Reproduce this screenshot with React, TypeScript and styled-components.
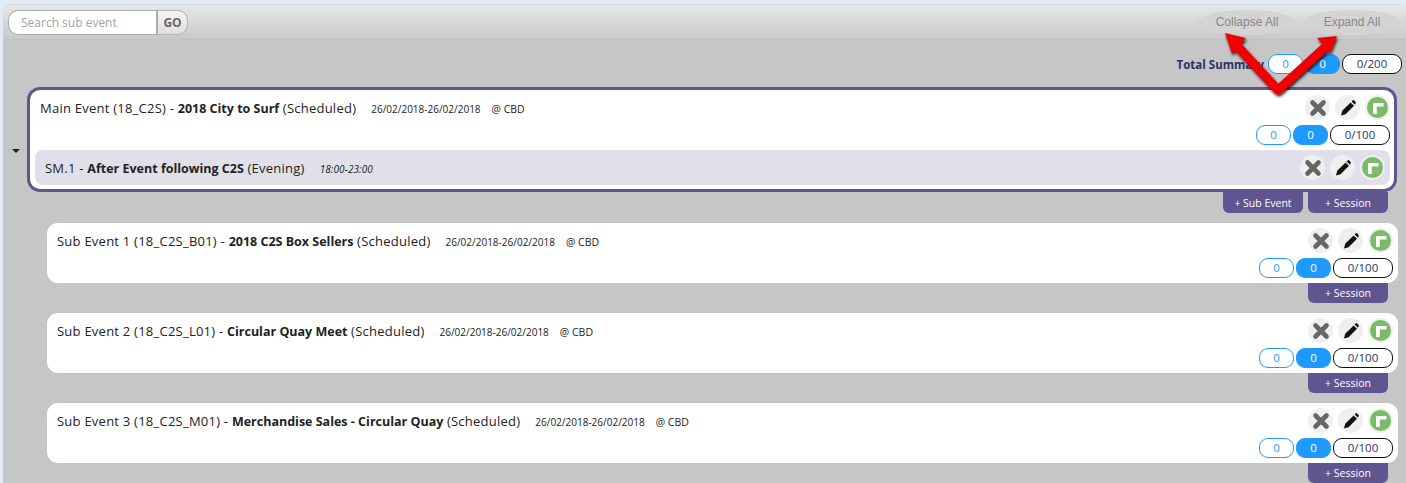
import styled, { createGlobalStyle } from "styled-components";

const GlobalStyle = createGlobalStyle`
  html, body {
    margin: 0;
    padding: 0;
    height: 483px;
    overflow: hidden;
    background: #e3ebf2;
    font-family: "Open Sans", sans-serif;
  }
`;

const subEvents = [
  { code: "Sub Event 1 (18_C2S_B01)", name: "2018 C2S Box Sellers" },
  { code: "Sub Event 2 (18_C2S_L01)", name: "Circular Quay Meet" },
  { code: "Sub Event 3 (18_C2S_M01)", name: "Merchandise Sales - Circular Quay" },
];

const CrossIcon = () => (
  <svg width="18" height="18" viewBox="0 0 18 18">
    <path d="M3.5 3.5 L14.5 14.5 M14.5 3.5 L3.5 14.5" stroke="#666" strokeWidth="4.6" strokeLinecap="round" />
  </svg>
);

const PencilIcon = () => (
  <svg width="18" height="18" viewBox="0 0 18 18">
    <path d="M2 16.5 L3.2 11.8 L11.6 3.4 L15 6.8 L6.6 15.2 Z M12.6 2.4 L13.8 1.2 Q14.4 .8 15 1.3 L16.6 3 Q17.1 3.6 16.6 4.2 L16 5.8 Z" fill="#111" />
  </svg>
);

const TurnIcon = () => (
  <svg width="12" height="12" viewBox="0 0 12 12">
    <path d="M1 12 V2 Q1 1 2 1 H11.5 V4.6 H4.8 V12 Z" fill="#fff" />
  </svg>
);

const Actions = () => (
  <ActionRow>
    <RoundButton>
      <CrossIcon />
    </RoundButton>
    <RoundButton>
      <PencilIcon />
    </RoundButton>
    <RoundButton>
      <GreenDot>
        <TurnIcon />
      </GreenDot>
    </RoundButton>
  </ActionRow>
);

const Counts = ({ total }: { total: string }) => (
  <CountRow>
    <Pill $kind="outline">0</Pill>
    <Pill $kind="filled">0</Pill>
    <Pill $kind="total">{total}</Pill>
  </CountRow>
);

const App = () => {
  return (
    <>
      <GlobalStyle />
      <Panel>
        <Toolbar>
          <SearchBox>
            <SearchInput placeholder="Search sub event" />
            <GoButton>GO</GoButton>
          </SearchBox>
          <ToolbarRight>
            <GhostButton>Collapse All</GhostButton>
            <GhostButton>Expand All</GhostButton>
          </ToolbarRight>
        </Toolbar>

        <SummaryRow>
          <SummaryLabel>Total Summary</SummaryLabel>
          <Counts total="0/200" />
        </SummaryRow>

        <MainRow>
          <Caret />
          <MainCard>
            <CardTop>
              <Title>
                Main Event (18_C2S) - <b>2018 City to Surf</b> (Scheduled)
                <Dates>26/02/2018-26/02/2018</Dates>
                <Place>@ CBD</Place>
              </Title>
              <Actions />
            </CardTop>
            <CardCounts>
              <Counts total="0/100" />
            </CardCounts>
            <SessionRow>
              <SessionTitle>
                SM.1 - <b>After Event following C2S</b> (Evening)
                <Times>18:00-23:00</Times>
              </SessionTitle>
              <Actions />
            </SessionRow>
          </MainCard>
        </MainRow>
        <TabRow>
          <Tab>+ Sub Event</Tab>
          <Tab>+ Session</Tab>
        </TabRow>

        {subEvents.map((item) => (
          <SubBlock key={item.code}>
            <SubCard>
              <SubTop>
                <Title>
                  {item.code} - <b>{item.name}</b> (Scheduled)
                  <Dates>26/02/2018-26/02/2018</Dates>
                  <Place>@ CBD</Place>
                </Title>
                <Actions />
              </SubTop>
              <SubCounts>
                <Counts total="0/100" />
              </SubCounts>
            </SubCard>
            <TabRow>
              <Tab>+ Session</Tab>
            </TabRow>
          </SubBlock>
        ))}

        <Arrows width="120" height="70" viewBox="0 0 120 70">
          <defs>
            <filter id="arrowShadow" x="-20%" y="-20%" width="140%" height="140%">
              <feDropShadow dx="1" dy="2" stdDeviation="1.5" floodColor="#000" floodOpacity="0.85" />
            </filter>
          </defs>
          <g filter="url(#arrowShadow)">
            <path d="M14.2 14.1 L55 58 L100.9 16.4" fill="none" stroke="#f00200" strokeWidth="9" strokeLinecap="round" strokeLinejoin="round" />
            <path d="M2 1 L23 6 L9 22 Z" fill="#f00200" />
            <path d="M114 4 L94 6 L107 21 Z" fill="#f00200" />
          </g>
        </Arrows>
      </Panel>
    </>
  );
};

export default App;

const Panel = styled.div`
  position: relative;
  margin: 4px 0 0 3px;
  height: 479px;
  background: #c6c6c6;
  border-radius: 9px 9px 0 0;
  overflow: hidden;
`;

const Toolbar = styled.div`
  display: flex;
  align-items: flex-start;
  justify-content: space-between;
  height: 36px;
  padding: 5px 4px 0 5px;
  box-sizing: border-box;
  background: linear-gradient(#e6e6e6, #c9c9c9);
  border-top: 1px solid #d4d8dc;
  border-bottom: 1px solid #c2c2c2;
`;

const SearchBox = styled.div`
  display: flex;
  height: 25px;
`;

const SearchInput = styled.input`
  width: 150px;
  height: 25px;
  box-sizing: border-box;
  padding: 0 12px;
  border: 1px solid #aaa;
  border-right-width: 2px;
  border-radius: 10px 0 0 10px;
  background: #fff;
  outline: none;
  font-family: "Open Sans", sans-serif;
  font-size: 12px;

  &::placeholder {
    color: #a3a3a3;
    opacity: 1;
  }
`;

const GoButton = styled.button`
  width: 30px;
  height: 25px;
  padding: 0;
  border: 1px solid #b4b4b4;
  border-left: 0;
  border-radius: 0 10px 10px 0;
  background: linear-gradient(#f4f4f4, #dedede);
  color: #666;
  font-family: "Open Sans", sans-serif;
  font-size: 12px;
  font-weight: 700;
`;

const ToolbarRight = styled.div`
  display: flex;
  gap: 5px;
`;

const GhostButton = styled.div`
  width: 100px;
  height: 25px;
  line-height: 25px;
  border-radius: 50%;
  background: #d4d4d4;
  color: #8a8684;
  font-family: "Liberation Sans", sans-serif;
  font-size: 12px;
  text-align: center;
`;

const SummaryRow = styled.div`
  display: flex;
  align-items: center;
  justify-content: flex-end;
  gap: 4px;
  height: 20px;
  margin-top: 14px;
  padding-right: 4px;
`;

const SummaryLabel = styled.span`
  color: #2a3563;
  font-size: 11.5px;
  font-weight: 700;
`;

const CountRow = styled.div`
  display: flex;
  gap: 2px;
`;

const pillStyles = {
  outline: "width: 35px; background: #fff; border: 1px solid #1e9aff; color: #1e9aff;",
  filled: "width: 35px; background: #1e9aff; border: 1px solid #1e9aff; color: #fff;",
  total: "width: 60px; background: #fff; border: 1px solid #111; color: #2a3563;",
};

const Pill = styled.div<{ $kind: keyof typeof pillStyles }>`
  ${(p) => pillStyles[p.$kind]}
  box-sizing: border-box;
  height: 20px;
  line-height: 18px;
  border-radius: 9px;
  font-size: 11.5px;
  text-align: center;
`;

const MainRow = styled.div`
  display: flex;
  align-items: center;
  margin-top: 13px;
`;

const Caret = styled.div`
  flex: none;
  width: 0;
  height: 0;
  margin: 23px 7px 0 9px;
  border-left: 4px solid transparent;
  border-right: 4px solid transparent;
  border-top: 4px solid #222;
`;

const MainCard = styled.div`
  box-sizing: border-box;
  width: 1370px;
  height: 105px;
  padding: 5px 4px 4px 5px;
  background: #fff;
  border: 3px solid #5f5590;
  border-radius: 13px;
`;

const CardTop = styled.div`
  display: flex;
  align-items: flex-start;
  justify-content: space-between;
`;

const Title = styled.div`
  padding: 4px 0 0 5px;
  color: #222;
  font-size: 13px;
  letter-spacing: 0.24px;
  line-height: 18px;
  white-space: nowrap;

  b {
    font-size: 12.5px;
    font-weight: 700;
    letter-spacing: 0;
  }
`;

const Dates = styled.span`
  margin-left: 15px;
  font-size: 10px;
  letter-spacing: 0;
`;

const Place = styled.span`
  margin-left: 11px;
  font-size: 10.5px;
  letter-spacing: 0;
`;

const Times = styled.span`
  margin-left: 15px;
  font-size: 10px;
  font-style: italic;
  letter-spacing: 0.1px;
`;

const ActionRow = styled.div`
  display: flex;
  gap: 5px;
`;

const RoundButton = styled.div`
  display: flex;
  align-items: center;
  justify-content: center;
  width: 25px;
  height: 25px;
  border-radius: 50%;
  background: #efefef;
`;

const GreenDot = styled.div`
  display: flex;
  align-items: center;
  justify-content: center;
  width: 21px;
  height: 21px;
  border-radius: 50%;
  background: #79bb68;
`;

const CardCounts = styled.div`
  display: flex;
  justify-content: flex-end;
  margin-top: 5px;
`;

const SessionRow = styled.div`
  display: flex;
  align-items: center;
  justify-content: space-between;
  height: 35px;
  margin-top: 5px;
  padding: 0 5px;
  background: #e1e0ea;
  border-radius: 8px;
`;

const SessionTitle = styled(Title)`
  padding-top: 1px;
`;

const TabRow = styled.div`
  display: flex;
  justify-content: flex-end;
  gap: 5px;
  padding-right: 18px;
`;

const Tab = styled.div`
  width: 80px;
  height: 21px;
  line-height: 22px;
  background: #5f5590;
  border-radius: 0 0 6px 6px;
  color: #fff;
  font-size: 10.5px;
  text-align: center;
`;

const SubBlock = styled.div`
  padding-top: 10px;

  ${Tab} {
    height: 20px;
    line-height: 20px;
  }
`;

const SubCard = styled.div`
  box-sizing: border-box;
  width: 1351px;
  height: 60px;
  margin-left: 44px;
  padding: 5px 5px 0 5px;
  background: #fff;
  border-radius: 11px;
`;

const SubTop = styled.div`
  display: flex;
  align-items: flex-start;
  justify-content: space-between;
`;

const SubCounts = styled.div`
  display: flex;
  justify-content: flex-end;
  margin-top: 5px;
`;

const Arrows = styled.svg`
  position: absolute;
  top: 28px;
  left: 1220px;
  overflow: visible;
`;
